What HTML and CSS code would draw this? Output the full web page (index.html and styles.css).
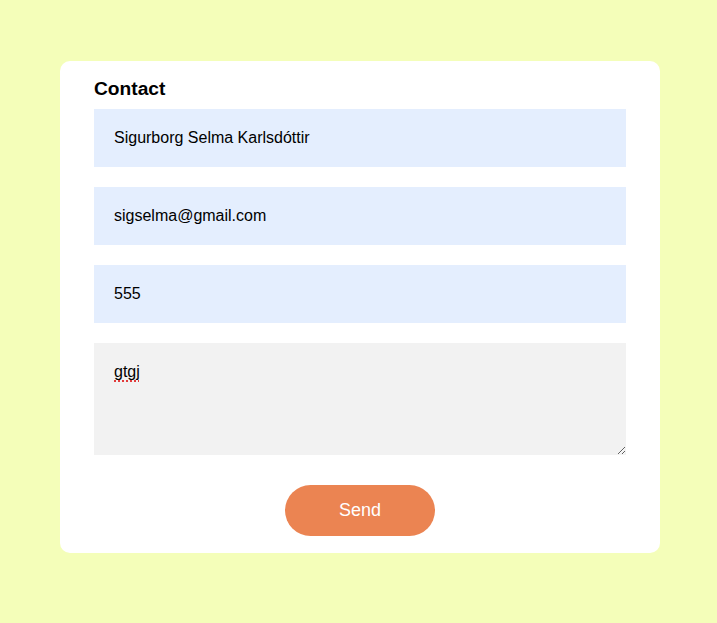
FILE: index.html
```html
<!DOCTYPE html>
<html lang="en">
<head>
<meta charset="utf-8">
<title>Contact</title>
<link rel="stylesheet" href="styles.css">
</head>
<body>
<form class="card">
  <h2 class="title">Contact</h2>
  <div class="fields">
    <input class="field filled" type="text" value="Sigurborg Selma Karlsdóttir">
    <input class="field filled" type="email" value="sigselma@gmail.com">
    <input class="field filled" type="text" value="555">
    <textarea class="field message" spellcheck="false">gtgj</textarea>
  </div>
  <div class="actions">
    <button class="send" type="button">Send</button>
  </div>
</form>
</body>
</html>
```
FILE: styles.css
```css
html, body {
  margin: 0;
  padding: 0;
}
body {
  background: #f4feb9;
  font-family: "Liberation Sans", Arial, sans-serif;
  min-height: 623px;
  padding-top: 61px;
  box-sizing: border-box;
}
.card {
  width: 600px;
  margin-left: 60px;
  box-sizing: border-box;
  background: #ffffff;
  border-radius: 10px;
  padding: 17px 34px 17px 34px;
}
.title {
  margin: 0 0 9px 0;
  font-size: 19.2px;
  line-height: 22px;
  font-weight: bold;
  color: #000;
}
.fields {
  display: flex;
  flex-direction: column;
  gap: 20px;
}
.field {
  display: block;
  width: 100%;
  box-sizing: border-box;
  border: none;
  outline: none;
  margin: 0;
  padding: 20px;
  font-family: "Liberation Sans", Arial, sans-serif;
  font-size: 16px;
  line-height: 18px;
  color: #000;
  border-radius: 0;
}
.filled {
  height: 58px;
  background: #e4eefe;
}
.message {
  height: 112px;
  background: #f2f2f2;
  resize: vertical;
  text-decoration: underline dotted #e23b3b;
  text-decoration-thickness: 2px;
  text-underline-offset: 3px;
}
.actions {
  display: flex;
  justify-content: center;
  margin-top: 30px;
}
.send {
  width: 150px;
  height: 51px;
  border: none;
  border-radius: 26px;
  background: #eb8452;
  color: #ffffff;
  font-family: "Liberation Sans", Arial, sans-serif;
  font-size: 18px;
  cursor: pointer;
}
```
